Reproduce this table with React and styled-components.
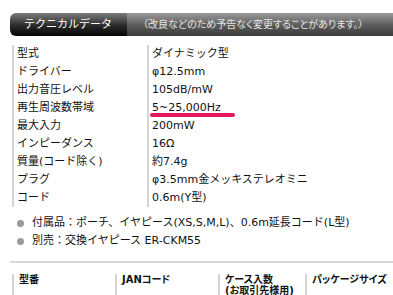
import React from 'react'
import styled, { createGlobalStyle } from 'styled-components'

const specs = [
    ['型式', 'ダイナミック型'],
    ['ドライバー', 'φ12.5mm'],
    ['出力音圧レベル', '105dB/mW'],
    ['再生周波数帯域', '5~25,000Hz', true],
    ['最大入力', '200mW'],
    ['インピーダンス', '16Ω'],
    ['質量(コード除く)', '約7.4g'],
    ['プラグ', 'φ3.5mm金メッキステレオミニ'],
    ['コード', '0.6m(Y型)'],
]

const notes = [
    '付属品：ポーチ、イヤピース(XS,S,M,L)、0.6m延長コード(L型)',
    '別売：交換イヤピース ER-CKM55',
]

function App() {
    return (
        <>
            <GlobalStyle />
            <Page>
                <HeaderBar>
                    <Tab>テクニカルデータ</Tab>
                    <Note>（改良などのため予告なく変更することがあります。）</Note>
                </HeaderBar>

                <SpecTable>
                    {
                        specs.map(([label, value, mark]) => (
                            <React.Fragment key={label}>
                                <Label>{label}</Label>
                                <Value>{mark ? <Marked>{value}</Marked> : value}</Value>
                            </React.Fragment>
                        ))
                    }
                </SpecTable>

                <Notes>
                    {
                        notes.map((n, i) => (
                            <li key={i}>{n}</li>
                        ))
                    }
                </Notes>

                <Divider />

                <HeadRow>
                    <HeadCell>型番</HeadCell>
                    <HeadCell>JANコード</HeadCell>
                    <HeadCell>ケース入数<br />(お取引先様用)</HeadCell>
                    <HeadCell>パッケージサイズ</HeadCell>
                </HeadRow>
            </Page>
        </>
    )
}

export default App

const GlobalStyle = createGlobalStyle`
    body {
        margin : 0 ;
        background : #fff ;
        font-family : "DejaVu Sans", "Noto Sans CJK JP", sans-serif ;
        color : #111 ;
    }
`

const Page = styled.div`
    width : 393px ;
    height : 295px ;
    overflow : hidden ;
    padding : 13px 0 0 10px ;
    box-sizing : border-box ;
`

const HeaderBar = styled.div`
    display : flex ;
    height : 23px ;
    align-items : stretch ;
`

const Tab = styled.div`
    width : 117px ;
    padding-left : 14px ;
    box-sizing : border-box ;
    border-radius : 6px 0 0 6px ;
    background : linear-gradient(#7c7c7c, #2a2a2a 55%, #050505) ;
    color : #fff ;
    font-size : 11px ;
    line-height : 23px ;
    white-space : nowrap ;
`

const Note = styled.div`
    flex : 1 ;
    padding-left : 16px ;
    background : linear-gradient(#9a9a9a, #5a5a5a 55%, #3a3a3a) ;
    color : #e4e4e4 ;
    font-size : 10px ;
    font-feature-settings : "palt" ;
    line-height : 23px ;
    white-space : nowrap ;
`

const SpecTable = styled.div`
    display : grid ;
    grid-template-columns : 135px 1fr ;
    margin : 9px 0 0 2px ;
    font-size : 11px ;
    line-height : 18px ;
`

const Label = styled.div`
    border-left : 2px solid #d4d4d4 ;
    padding-left : 3px ;
    white-space : nowrap ;
`

const Value = styled.div`
    border-left : 2px solid #d4d4d4 ;
    padding-left : 3px ;
    white-space : nowrap ;
`

const Marked = styled.span`
    position : relative ;

    &::after {
        content : '' ;
        position : absolute ;
        left : -2px ;
        right : -14px ;
        bottom : -3px ;
        height : 4px ;
        border-radius : 2px ;
        background : #e5185d ;
    }
`

const Notes = styled.ul`
    list-style : none ;
    margin : 7px 0 0 ;
    padding : 0 0 0 22px ;
    font-size : 11px ;
    line-height : 18px ;

    li {
        position : relative ;
        white-space : nowrap ;

        &::before {
            content : '' ;
            position : absolute ;
            left : -15px ;
            top : 6px ;
            width : 7px ;
            height : 7px ;
            border-radius : 50% ;
            background : #9a9a9a ;
        }
    }
`

const Divider = styled.div`
    height : 2px ;
    background : #d8d8d8 ;
    margin-top : 11px ;
`

const HeadRow = styled.div`
    display : grid ;
    grid-template-columns : 103px 103px 87px 1fr ;
    margin : 11px 0 0 2px ;
    font-size : 10px ;
    font-weight : bold ;
    font-feature-settings : "palt" ;
    line-height : 11px ;
`

const HeadCell = styled.div`
    border-left : 2px solid #d4d4d4 ;
    padding-left : 5px ;
    height : 30px ;
    white-space : nowrap ;
`
